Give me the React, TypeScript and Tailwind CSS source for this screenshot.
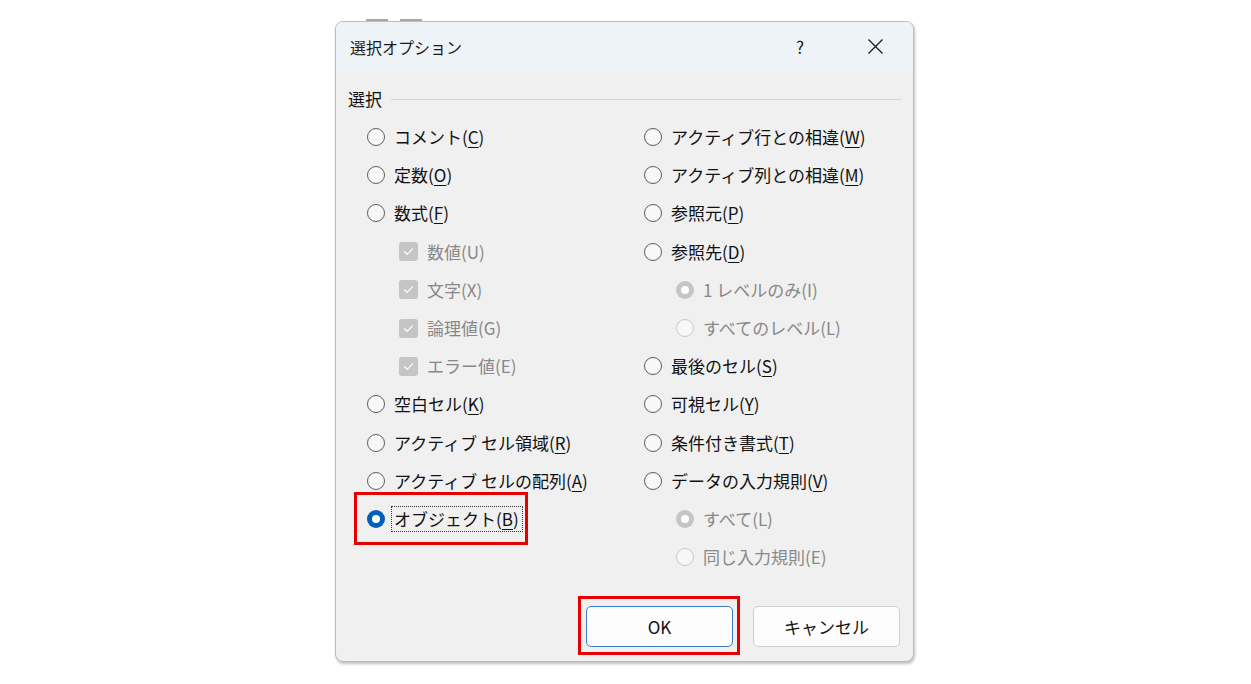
import React from 'react';

type Item = {
  label: string;
  key?: string;
  kind: 'radio' | 'check';
  indent?: boolean;
  disabled?: boolean;
  checked?: boolean;
  focus?: boolean;
};

const leftItems: Item[] = [
  { label: 'コメント', key: 'C', kind: 'radio' },
  { label: '定数', key: 'O', kind: 'radio' },
  { label: '数式', key: 'F', kind: 'radio' },
  { label: '数値(U)', kind: 'check', indent: true, disabled: true, checked: true },
  { label: '文字(X)', kind: 'check', indent: true, disabled: true, checked: true },
  { label: '論理値(G)', kind: 'check', indent: true, disabled: true, checked: true },
  { label: 'エラー値(E)', kind: 'check', indent: true, disabled: true, checked: true },
  { label: '空白セル', key: 'K', kind: 'radio' },
  { label: 'アクティブ セル領域', key: 'R', kind: 'radio' },
  { label: 'アクティブ セルの配列', key: 'A', kind: 'radio' },
  { label: 'オブジェクト', key: 'B', kind: 'radio', checked: true, focus: true },
];

const rightItems: Item[] = [
  { label: 'アクティブ行との相違', key: 'W', kind: 'radio' },
  { label: 'アクティブ列との相違', key: 'M', kind: 'radio' },
  { label: '参照元', key: 'P', kind: 'radio' },
  { label: '参照先', key: 'D', kind: 'radio' },
  { label: '1 レベルのみ(I)', kind: 'radio', indent: true, disabled: true, checked: true },
  { label: 'すべてのレベル(L)', kind: 'radio', indent: true, disabled: true },
  { label: '最後のセル', key: 'S', kind: 'radio' },
  { label: '可視セル', key: 'Y', kind: 'radio' },
  { label: '条件付き書式', key: 'T', kind: 'radio' },
  { label: 'データの入力規則', key: 'V', kind: 'radio' },
  { label: 'すべて(L)', kind: 'radio', indent: true, disabled: true, checked: true },
  { label: '同じ入力規則(E)', kind: 'radio', indent: true, disabled: true },
];

function RadioMark({ checked, disabled }: { checked?: boolean; disabled?: boolean }) {
  if (checked) {
    return (
      <span
        className={`flex h-[18px] w-[18px] shrink-0 items-center justify-center rounded-full ${
          disabled ? 'bg-[#c5c5c5]' : 'bg-[#005fb8]'
        }`}
      >
        <span className="h-[8px] w-[8px] rounded-full bg-white" />
      </span>
    );
  }
  return (
    <span
      className={
        disabled
          ? 'h-[18px] w-[18px] shrink-0 rounded-full border border-[#c9c9c9] bg-[#f7f7f7]'
          : 'h-[18px] w-[18px] shrink-0 rounded-full border border-[#5c5c5c] bg-[#f8f8f8]'
      }
    />
  );
}

function CheckMark() {
  return (
    <span className="flex h-[19px] w-[19px] shrink-0 items-center justify-center rounded-[3px] bg-[#c5c5c5]">
      <svg width="11" height="9" viewBox="0 0 11 9" fill="none">
        <path d="M1.5 4.8 L4.2 7.3 L9.5 1.8" stroke="white" strokeWidth="1.2" strokeLinecap="round" strokeLinejoin="round" />
      </svg>
    </span>
  );
}

function Option({ item }: { item: Item }) {
  const text = item.key ? (
    <>
      {item.label}(<span className="underline decoration-1 underline-offset-[3px]">{item.key}</span>)
    </>
  ) : (
    item.label
  );
  return (
    <div className={`relative flex h-[38.2px] items-center ${item.indent ? 'pl-[32px]' : ''}`}>
      {item.kind === 'radio' ? <RadioMark checked={item.checked} disabled={item.disabled} /> : <CheckMark />}
      <span
        className={`whitespace-nowrap leading-[24px] ${item.disabled ? 'text-[#888888]' : 'text-[#111111]'} ${
          item.focus ? 'ml-[7px] pl-[2px] pr-[3px] outline outline-1 outline-dotted outline-[#333]' : 'ml-[9px]'
        }`}
      >
        {text}
      </span>
      {item.focus && (
        <div className="pointer-events-none absolute left-[-13px] top-[-8px] h-[53px] w-[174px] border-[3px] border-[#e50000]" />
      )}
    </div>
  );
}

export default function App() {
  return (
    <div
      className="relative h-[684px] w-[1251px] overflow-hidden bg-white"
      style={{ fontFamily: '"Noto Sans CJK JP", "Noto Sans", sans-serif' }}
    >
      {/* sheet remnants peeking above the dialog */}
      <div className="absolute left-[366px] top-[19px] flex gap-[12px]">
        <span className="h-[2px] w-[22px] bg-[#a8a8a8]" />
        <span className="h-[2px] w-[22px] bg-[#a8a8a8]" />
      </div>

      <div className="ml-[335px] mt-[21px] flex h-[641px] w-[579px] flex-col overflow-hidden rounded-[8px] border border-[#bcbcbc] bg-[#f0f0f0] shadow-[1px_2px_3px_rgba(0,0,0,0.25)]">
        {/* title bar */}
        <div className="flex h-[49px] items-center bg-[#eef3f8] pl-[14px] text-[16px] text-[#1a1a1a]">
          <span className="flex-1">選択オプション</span>
          <span className="w-[24px] text-center text-[17px]">?</span>
          <span className="ml-[51px] mr-[26px] flex w-[24px] justify-center">
            <svg width="17" height="17" viewBox="0 0 17 17">
              <path d="M1.5 1.5 L15.5 15.5 M15.5 1.5 L1.5 15.5" stroke="#1a1a1a" strokeWidth="1.3" />
            </svg>
          </span>
        </div>

        {/* body */}
        <div className="flex flex-1 flex-col px-[12px] text-[17px]">
          <div className="mt-[15px] flex h-[26px] items-center">
            <span className="text-[#111111]">選択</span>
            <span className="ml-[9px] h-px flex-1 bg-[#d5d5d5]" />
          </div>

          <div className="ml-[19px] mt-[6px] grid grid-cols-[277px_1fr]">
            <div className="flex flex-col">
              {leftItems.map((it) => (
                <Option key={it.label} item={it} />
              ))}
            </div>
            <div className="flex flex-col">
              {rightItems.map((it) => (
                <Option key={it.label} item={it} />
              ))}
            </div>
          </div>

          <div className="mb-[14px] mt-auto flex justify-end gap-[20px] pr-[1px]">
            <div className="relative">
              <button className="flex h-[41px] w-[147px] items-center justify-center rounded-[5px] border border-[#3c7fc4] bg-[#fdfdfd] text-[17px] text-[#111111]">
                OK
              </button>
              <div className="pointer-events-none absolute left-[-8px] top-[-10px] h-[59px] w-[162px] border-[3px] border-[#e50000]" />
            </div>
            <button className="flex h-[41px] w-[147px] items-center justify-center rounded-[5px] border border-[#d0d0d0] bg-[#fdfdfd] text-[17px] text-[#111111]">
              キャンセル
            </button>
          </div>
        </div>
      </div>
    </div>
  );
}
